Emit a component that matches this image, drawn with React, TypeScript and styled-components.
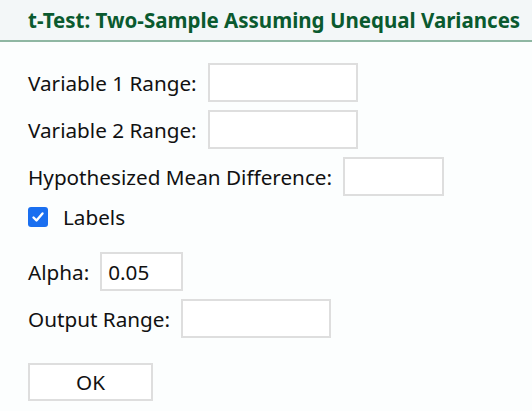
import React from "react";
import styled, { createGlobalStyle } from "styled-components";

const Global = createGlobalStyle`
  html, body { margin: 0; padding: 0; background: #fcfefe; }
  body { font-family: "Noto Sans", "Open Sans", sans-serif; color: #111; }
  * { box-sizing: border-box; }
`;

const Header = styled.header`
  height: 42px;
  background: #f3f7f8;
  border-bottom: 2px solid #8fb7a3;
  display: flex;
  align-items: center;
  padding-left: 28px;
`;

const Title = styled.h1`
  margin: 0;
  font-size: 20.5px;
  font-weight: 700;
  color: #0a5a2f;
  white-space: nowrap;
`;

const Form = styled.div`
  display: flex;
  flex-direction: column;
  padding: 21px 0 0 28px;
`;

const Row = styled.div<{ $mt?: number }>`
  display: flex;
  align-items: center;
  gap: 11px;
  height: 39px;
  margin-top: ${(p) => p.$mt ?? 0}px;
`;

const Label = styled.label`
  font-size: 20.7px;
  white-space: nowrap;
`;

const Input = styled.input<{ $w: number }>`
  width: ${(p) => p.$w}px;
  height: 39px;
  border: 2px solid #dedede;
  background: #fff;
  font-family: inherit;
  font-size: 20.7px;
  padding: 0 6px;
  color: #111;
  outline: none;
`;

const CheckRow = styled.label`
  display: flex;
  align-items: center;
  gap: 15px;
  height: 21px;
  margin-top: 10px;
  font-size: 20.7px;
`;

const Box = styled.span`
  width: 20px;
  height: 20px;
  border-radius: 3px;
  background: #1a6ff0;
  display: flex;
  align-items: center;
  justify-content: center;
`;

const Button = styled.button`
  width: 125px;
  height: 38px;
  margin-top: 25px;
  border: 2px solid #dedede;
  background: #fff;
  font-family: inherit;
  font-size: 20.7px;
  color: #111;
  padding: 0;
`;

export default function App() {
  return (
    <>
      <Global />
      <Header>
        <Title>t-Test: Two-Sample Assuming Unequal Variances</Title>
      </Header>
      <Form>
        <Row>
          <Label>Variable 1 Range:</Label>
          <Input $w={150} />
        </Row>
        <Row $mt={8}>
          <Label>Variable 2 Range:</Label>
          <Input $w={150} />
        </Row>
        <Row $mt={8}>
          <Label>Hypothesized Mean Difference:</Label>
          <Input $w={101} />
        </Row>
        <CheckRow>
          <Box>
            <svg width="14" height="14" viewBox="0 0 14 14">
              <path d="M2.5 7.5 L5.5 10.5 L11.5 3.5" fill="none" stroke="#fff" strokeWidth="2.4" strokeLinecap="round" strokeLinejoin="round" />
            </svg>
          </Box>
          Labels
        </CheckRow>
        <Row $mt={25}>
          <Label>Alpha:</Label>
          <Input $w={83} defaultValue="0.05" />
        </Row>
        <Row $mt={8}>
          <Label>Output Range:</Label>
          <Input $w={150} />
        </Row>
        <Button>OK</Button>
      </Form>
    </>
  );
}
